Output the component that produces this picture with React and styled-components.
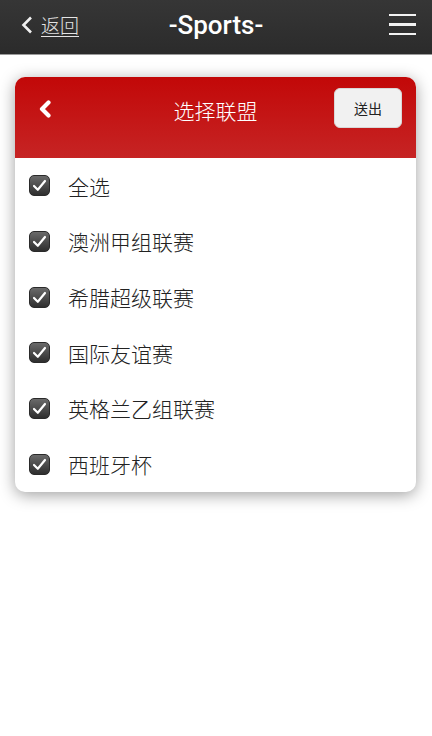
import React, { useState } from "react";
import styled, { createGlobalStyle } from "styled-components";

const Global = createGlobalStyle`
  html, body { margin: 0; padding: 0; background: #fff; }
  body { font-family: "Liberation Sans", "Noto Sans CJK SC", sans-serif; }
  * { box-sizing: border-box; }
`;

const Page = styled.div`
  width: 432px;
  min-height: 736px;
  background: #fff;
`;

const TopBar = styled.header`
  height: 55px;
  display: grid;
  grid-template-columns: 1fr auto 1fr;
  align-items: center;
  padding: 0 16px 5px 16px;
  background: linear-gradient(#363636, #2b2b2b);
  border-bottom: 1px solid #9a9a9a;
`;

const BackLink = styled.a`
  margin-left: 5px;
  display: flex;
  align-items: center;
  gap: 8px;
  color: #e4e4e4;
  font-family: "Noto Sans CJK SC", sans-serif;
  font-weight: 300;
  font-size: 19px;
  text-decoration: underline;
  text-underline-offset: 3px;
  text-decoration-thickness: 1px;
  justify-self: start;
`;

const BarTitle = styled.h1`
  margin: 0;
  color: #fff;
  font-family: Roboto, "Liberation Sans", sans-serif;
  font-weight: 500;
  font-size: 26px;
`;

const Burger = styled.button`
  justify-self: end;
  display: flex;
  flex-direction: column;
  gap: 7px;
  background: none;
  border: 0;
  padding: 0;
  & span {
    display: block;
    width: 27px;
    height: 2.5px;
    background: #f2f2f2;
  }
`;

const Card = styled.section`
  margin: 22px 16px 0 15px;
  border-radius: 10px;
  overflow: hidden;
  background: #fff;
  box-shadow: 0 3px 16px rgba(0, 0, 0, 0.38);
`;

const CardHead = styled.div`
  height: 81px;
  display: grid;
  grid-template-columns: 1fr auto 1fr;
  align-items: start;
  padding: 11px 14px 0 14px;
  background: linear-gradient(#c20808, #c62424);
`;

const HeadBack = styled.span`
  margin: 12px 0 0 8px;
  justify-self: start;
  display: flex;
`;

const HeadTitle = styled.h2`
  margin: 7px 0 0;
  color: #fff;
  font-family: "Noto Sans CJK SC", sans-serif;
  font-weight: 300;
  font-size: 21px;
`;

const SendButton = styled.button`
  justify-self: end;
  width: 68px;
  height: 40px;
  border: 1px solid #d8d8d8;
  border-radius: 6px;
  background: #f1f1f1;
  color: #222;
  font-family: "Noto Sans CJK SC", sans-serif;
  font-size: 14px;
`;

const List = styled.ul`
  list-style: none;
  margin: 0;
  padding: 0;
`;

const Row = styled.li`
  height: 55.67px;
  display: flex;
  align-items: center;
  gap: 18px;
  padding-left: 14px;
  cursor: pointer;
`;

const Box = styled.span`
  width: 21px;
  height: 21px;
  border-radius: 5px;
  display: flex;
  align-items: center;
  justify-content: center;
  background: ${(p) => (p.$on ? "linear-gradient(#6a6a6a, #2e2e2e)" : "#fff")};
  border: 1px solid #2a2a2a;
`;

const Label = styled.span`
  color: #222;
  font-family: "Noto Sans CJK SC", sans-serif;
  font-weight: 300;
  font-size: 21px;
`;

const leagues = ["全选", "澳洲甲组联赛", "希腊超级联赛", "国际友谊赛", "英格兰乙组联赛", "西班牙杯"];

export default function App() {
  const [checked, setChecked] = useState(leagues.map(() => true));
  const toggle = (i) => setChecked((c) => c.map((v, j) => (j === i ? !v : v)));
  return (
    <Page>
      <Global />
      <TopBar>
        <BackLink>
          <svg width="12" height="18" viewBox="0 0 12 18">
            <polyline points="10,1.5 2.5,9 10,16.5" fill="none" stroke="#f0f0f0" strokeWidth="2.6" />
          </svg>
          返回
        </BackLink>
        <BarTitle>-Sports-</BarTitle>
        <Burger aria-label="menu">
          <span />
          <span />
          <span />
        </Burger>
      </TopBar>
      <Card>
        <CardHead>
          <HeadBack>
            <svg width="16" height="18" viewBox="0 0 16 18">
              <polyline points="11.5,2.5 5,9 11.5,15.5" fill="none" stroke="#fff" strokeWidth="4.2" strokeLinecap="round" strokeLinejoin="round" />
            </svg>
          </HeadBack>
          <HeadTitle>选择联盟</HeadTitle>
          <SendButton>送出</SendButton>
        </CardHead>
        <List>
          {leagues.map((l, i) => (
            <Row key={l} onClick={() => toggle(i)}>
              <Box $on={checked[i]}>
                {checked[i] && (
                  <svg width="15" height="13" viewBox="0 0 15 13">
                    <polyline points="2,7 5.8,10.8 13,2" fill="none" stroke="#fff" strokeWidth="2.2" strokeLinejoin="round" strokeLinecap="round" />
                  </svg>
                )}
              </Box>
              <Label>{l}</Label>
            </Row>
          ))}
        </List>
      </Card>
    </Page>
  );
}
